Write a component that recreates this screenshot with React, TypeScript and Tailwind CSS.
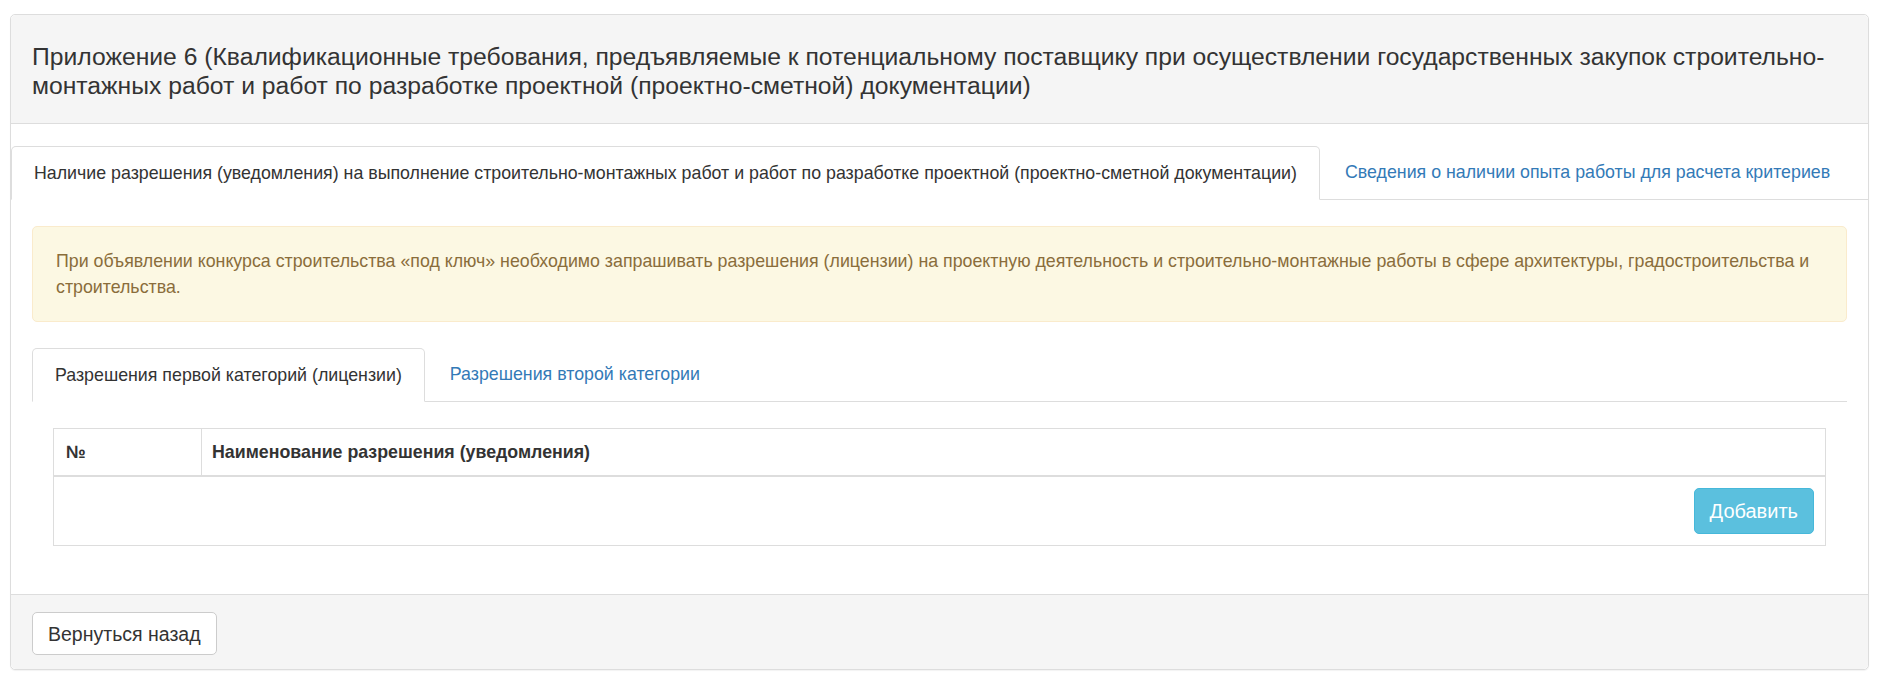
export default function App() {
  return (
    <div className="min-h-screen bg-white pt-[14px] pl-[10px] pr-[16px] font-['Liberation_Sans',Arial,sans-serif] text-[17.8px] leading-[24px] text-[#333]">
      <div className="rounded-[5px] border border-[#ddd] shadow-[0_1px_1px_rgba(0,0,0,0.05)]">
        {/* заголовок */}
        <div className="rounded-t-[5px] border-b border-[#ddd] bg-[#f5f5f5] px-[21px] pt-[27px] pb-[23px]">
          <h3 className="text-[24.7px] leading-[29px] text-[#333]">
            Приложение 6 (Квалификационные требования, предъявляемые к потенциальному поставщику при осуществлении государственных закупок строительно-монтажных работ и работ по разработке проектной (проектно-сметной) документации)
          </h3>
        </div>

        {/* тело */}
        <div className="pt-[22px] pb-[48px]">
          <ul className="flex border-b border-[#ddd] whitespace-nowrap">
            <li className="-mb-px rounded-t-[5px] border border-[#ddd] border-b-transparent bg-white px-[22px] pt-[14px] pb-[14px]">
              Наличие разрешения (уведомления) на выполнение строительно-монтажных работ и работ по разработке проектной (проектно-сметной документации)
            </li>
            <li className="ml-[2px] px-[23px] pt-[14px] pb-[14px] text-[#337ab7]">
              Сведения о наличии опыта работы для расчета критериев
            </li>
          </ul>

          <div className="px-[21px] pt-[26px]">
            <div className="rounded-[5px] border border-[#faebcc] bg-[#fcf8e3] px-[23px] py-[21px] leading-[26px] text-[#8a6d3b]">
              При объявлении конкурса строительства «под ключ» необходимо запрашивать разрешения (лицензии) на проектную деятельность и строительно-монтажные работы в сфере архитектуры, градостроительства и строительства.
            </div>

            <ul className="mt-[26px] flex border-b border-[#ddd] whitespace-nowrap">
              <li className="-mb-px rounded-t-[5px] border border-[#ddd] border-b-transparent bg-white px-[22px] pt-[14px] pb-[14px]">
                Разрешения первой категорий (лицензии)
              </li>
              <li className="ml-[2px] px-[23px] pt-[14px] pb-[14px] text-[#337ab7]">
                Разрешения второй категории
              </li>
            </ul>

            <div className="px-[21px] pt-[26px]">
              <table className="w-full border-collapse border border-[#ddd]">
                <thead>
                  <tr>
                    <th className="w-[148px] border border-b-2 border-[#ddd] px-[12px] py-[11px] text-left font-bold">№</th>
                    <th className="border border-b-2 border-[#ddd] px-[10px] py-[11px] text-left font-bold">
                      Наименование разрешения (уведомления)
                    </th>
                  </tr>
                </thead>
                <tbody>
                  <tr>
                    <td colSpan={2} className="border border-[#ddd] px-[11px] py-[11px] text-right">
                      <button className="h-[46px] rounded-[5px] border border-[#46b8da] bg-[#5bc0de] px-[15px] text-[20px] text-white">
                        Добавить
                      </button>
                    </td>
                  </tr>
                </tbody>
              </table>
            </div>
          </div>
        </div>

        {/* подвал */}
        <div className="rounded-b-[5px] border-t border-[#ddd] bg-[#f5f5f5] px-[21px] pt-[17px] pb-[14px]">
          <button className="h-[43px] rounded-[5px] border border-[#ccc] bg-white px-[15px] text-[19.5px] text-[#333]">
            Вернуться назад
          </button>
        </div>
      </div>
    </div>
  );
}
